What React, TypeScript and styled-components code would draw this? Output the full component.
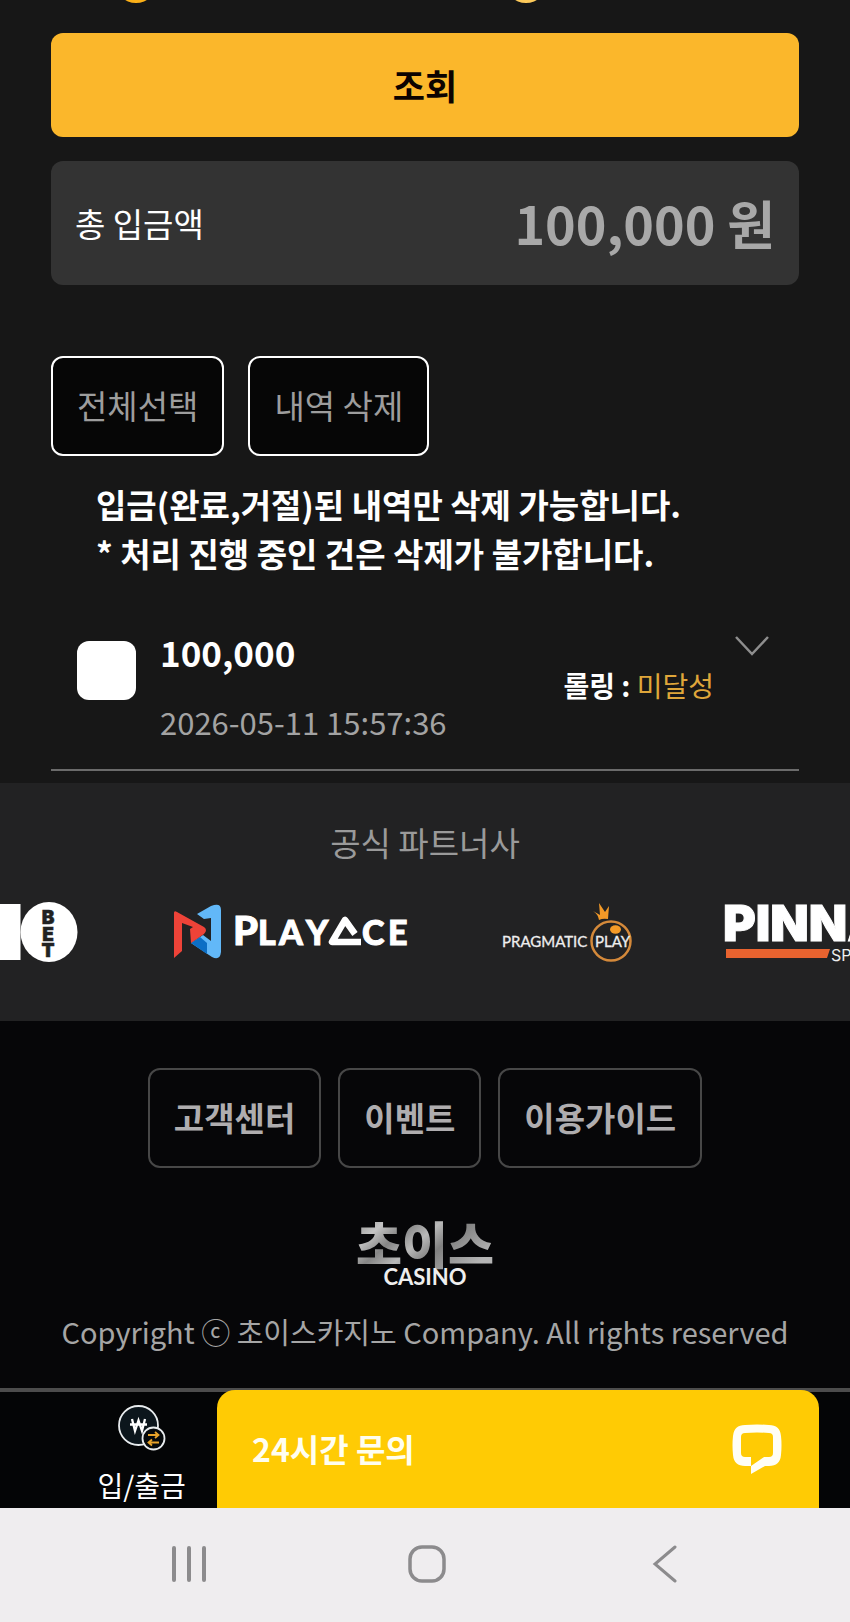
import React from "react";
import styled, { createGlobalStyle } from "styled-components";

const GlobalStyle = createGlobalStyle`
  *, *::before, *::after { box-sizing: border-box; }
  body {
    margin: 0;
    background: #171717;
    color: #fff;
    font-family: "Noto Sans CJK KR", sans-serif;
  }
  button { font: inherit; cursor: pointer; }
  a { color: inherit; text-decoration: none; }
  h2, p { margin: 0; font-weight: 400; }
`;

const Page = styled.div`
  display: flex;
  flex-direction: column;
  overflow: hidden;
`;

const Content = styled.main`
  display: flex;
  flex-direction: column;
  padding: 0 51px 12px;
`;

const Range = styled.div`
  display: grid;
  grid-template-columns: 390px 1fr;
  height: 33px;
  padding-left: 64px;
`;

const Knob = styled.span<{ $tone: string }>`
  width: 42px;
  height: 42px;
  margin-top: -39px;
  border-radius: 50%;
  background: ${(p) => p.$tone};
`;

const SearchButton = styled.button`
  height: 104px;
  padding: 0 0 2px;
  border: 0;
  border-radius: 12px;
  background: #fbb72b;
  color: #0c0300;
  font-size: 35px;
  font-weight: 700;
`;

const Total = styled.section`
  display: flex;
  align-items: center;
  justify-content: space-between;
  height: 124px;
  margin-top: 24px;
  padding: 0 24px;
  border-radius: 12px;
  background: #333;
`;

const TotalLabel = styled.span`
  font-size: 33px;
`;

const TotalValue = styled.strong`
  color: #a8a8a8;
  font-size: 52px;
  line-height: 64px;
`;

const Actions = styled.div`
  display: flex;
  gap: 24px;
  margin-top: 71px;
`;

const OutlineButton = styled.button<{ $muted?: boolean }>`
  height: 100px;
  padding: 0 24px 2px;
  border: 2px solid ${(p) => (p.$muted ? "#474747" : "#fff")};
  border-radius: 12px;
  background: ${(p) => (p.$muted ? "transparent" : "#060606")};
  color: ${(p) => (p.$muted ? "#afadaf" : "#9d9d9d")};
  font-size: 33px;
  font-weight: ${(p) => (p.$muted ? 700 : 400)};
  white-space: nowrap;
`;

const Notice = styled.p`
  margin-top: 24px;
  padding-left: 45px;
  font-size: 33px;
  font-weight: 700;
  line-height: 49px;
`;

const Entry = styled.article`
  display: flex;
  align-items: center;
  height: 193px;
  padding: 0 26px 6px;
  border-bottom: 2px solid #6b6b6b;
`;

const Check = styled.input`
  appearance: none;
  flex: none;
  width: 59px;
  height: 59px;
  margin: 0 24px 0 0;
  border-radius: 12px;
  background: #fff;
`;

const EntryText = styled.label`
  display: flex;
  flex: 1;
  flex-direction: column;
  gap: 20px;
  padding-top: 32px;
`;

const Amount = styled.strong`
  font-size: 35px;
  line-height: 50px;
`;

const Time = styled.time`
  color: #a3a3a3;
  font-size: 31px;
  line-height: 50px;
`;

const Rolling = styled.span`
  padding-top: 28px;
  font-size: 28px;
  font-weight: 700;
`;

const Unmet = styled.span`
  color: #dfa63a;
  font-weight: 400;
`;

const Expand = styled.button`
  align-self: flex-start;
  display: flex;
  margin: 57px 3px 0 20px;
  padding: 0;
  border: 0;
  background: none;
`;

const Partners = styled.section`
  display: flex;
  flex-direction: column;
  align-items: center;
  height: 238px;
  padding-top: 34px;
  background: #222223;
`;

const PartnersTitle = styled.h2`
  color: #9a9a9a;
  font-size: 33px;
  line-height: 50px;
`;

const LogoStrip = styled.div`
  display: flex;
  justify-content: space-between;
  width: 100%;
  margin-top: 33px;
`;

const Footer = styled.footer`
  display: flex;
  flex-direction: column;
  align-items: center;
  height: 367px;
  padding-top: 47px;
  background: #060608;
`;

const FooterLinks = styled.nav`
  display: flex;
  gap: 17px;
`;

const Copyright = styled.p`
  margin-top: 17px;
  color: #a5a5a5;
  font-size: 29px;
  line-height: 50px;
  white-space: nowrap;
`;

const Brand = styled.div`
  display: flex;
  margin-top: 49px;
`;

const BottomBar = styled.div`
  position: relative;
  display: grid;
  grid-template-columns: repeat(3, 1fr);
  height: 120px;
  border-top: 4px solid #4c4c4c;
  background: #040506;
`;

const BottomItem = styled.a`
  display: flex;
  flex-direction: column;
  align-items: center;
  gap: 11px;
  padding-top: 11px;
  font-size: 28px;
  line-height: 42px;
`;

const Chat = styled.button`
  position: absolute;
  top: -2px;
  right: 31px;
  bottom: 0;
  left: 217px;
  display: flex;
  align-items: center;
  justify-content: space-between;
  padding: 0 36px 0 35px;
  border: 0;
  border-radius: 18px 18px 0 0;
  background: #ffcb04;
  color: #fffef0;
  font-size: 32px;
  font-weight: 700;
`;

const ChatLabel = styled.span`
  padding-bottom: 2px;
`;

const SystemNav = styled.nav`
  display: grid;
  grid-template-columns: repeat(3, 1fr);
  align-items: center;
  height: 114px;
  padding: 0 66px 2px 70px;
  background: #efedef;
`;

const SystemButton = styled.button`
  display: flex;
  justify-content: center;
  padding: 0;
  border: 0;
  background: none;
`;

const TenBetLogo = () => (
  <svg width="80" height="64" viewBox="0 0 80 64" role="img" aria-label="10BET">
    <path d="M0 4H20.500V60H0Z" fill="#fff" />
    <ellipse cx="49" cy="32" rx="28.500" ry="30" fill="#fff" />
    <g fill="#222" stroke="#222" strokeWidth="0.500" fontFamily="Inter, sans-serif" fontWeight="900" fontSize="19" textAnchor="middle">
      <text x="48" y="24">B</text>
      <text x="48" y="40.500">E</text>
      <text x="48" y="57">T</text>
    </g>
  </svg>
);

const PlayAceLogo = () => (
  <svg width="240" height="64" viewBox="0 0 240 64" role="img" aria-label="PlayAce">
    <g transform="translate(2 0)">
      <path d="M24 14 38 6Q48 2 48 10V52Q47 61 39 57L18 43 30 35 38 41V18L31 19Z" fill="#62b8f8" />
      <path d="M18 43 27 37 34 43V54Z" fill="#0d6fc5" />
      <path d="M1 13Q1 10 4 12L31 27Q35 30 31 34L18 43 17 29 20 27 9 23V51L1 58Z" fill="#ee4338" />
    </g>
    <g fill="#fff" stroke="#fff" fontFamily="Lato, sans-serif" fontWeight="900">
      <text x="62" y="45" fontSize="40">P</text>
      <text x="87" y="45" fontSize="34">L</text>
      <text x="108" y="45" fontSize="34">A</text>
      <text x="135" y="45" fontSize="34">Y</text>
      <text x="191" y="45" fontSize="34">C</text>
      <text x="217" y="45" fontSize="34">E</text>
    </g>
    <path d="M184 34 174 20 161 42H190" fill="none" stroke="#fff" strokeWidth="6.500" strokeLinejoin="round" />
  </svg>
);

const PragmaticLogo = () => (
  <svg width="132" height="64" viewBox="0 0 132 64" role="img" aria-label="Pragmatic Play">
    <circle cx="110" cy="41" r="19.500" fill="none" stroke="#d4893a" strokeWidth="2.500" />
    <path d="M98 20Q97 14 92 11L99 15 98 3 104 12 108 6 107 19Q102 18 98 20Z" fill="#f49a27" />
    <ellipse cx="114.500" cy="29.500" rx="5.500" ry="4.200" fill="#f49a27" />
    <g fill="#eee" stroke="#eee" strokeWidth="0.300" fontFamily="Lato, sans-serif" fontSize="15">
      <text x="1" y="47">PRAGMATIC</text>
      <text x="94" y="47">PLAY</text>
    </g>
  </svg>
);

const PinnacleLogo = () => (
  <svg width="126" height="64" viewBox="0 0 126 64" role="img" aria-label="Pinnacle Sports">
    <text x="-1" y="41" fill="#fff" stroke="#fff" fontFamily="Inter, sans-serif" fontWeight="900" fontSize="50">PINNA</text>
    <path d="M2 49H106L103 58H2Z" fill="#e8632f" />
    <text x="107" y="61" fill="#eee" fontFamily="Inter, sans-serif" fontSize="16">SP</text>
  </svg>
);

const BrandLogo = () => (
  <svg width="136" height="72" viewBox="0 0 136 72" overflow="visible" role="img" aria-label="초이스 CASINO">
    <defs>
      <linearGradient id="metal" x1="0" y1="0" x2="1" y2="0.600">
        <stop offset="0" stopColor="#777" />
        <stop offset="0.250" stopColor="#c4c4c4" />
        <stop offset="0.400" stopColor="#858585" />
        <stop offset="0.550" stopColor="#b9b9b9" />
        <stop offset="0.700" stopColor="#808080" />
        <stop offset="1" stopColor="#b5b5b5" />
      </linearGradient>
    </defs>
    <text x="68" y="47" textAnchor="middle" fill="url(#metal)" fontFamily="Noto Sans CJK KR, sans-serif" fontWeight="900" fontSize="50">초이스</text>
    <text x="68" y="68" textAnchor="middle" fill="#eee" fontFamily="Lato, sans-serif" fontWeight="700" fontSize="22">CASINO</text>
  </svg>
);

const ExchangeIcon = () => (
  <svg width="52" height="50" viewBox="0 0 52 50" aria-hidden="true">
    <circle cx="22.500" cy="22.500" r="19.500" fill="#0c161c" stroke="#e8ecee" strokeWidth="1.800" />
    <path d="M16 16 19 28 22.500 17.500 26 28 29 16M14 21.500H31" fill="none" stroke="#fff" strokeWidth="2.300" />
    <circle cx="37.500" cy="35.500" r="11" fill="#05090b" stroke="#e8ecee" strokeWidth="1.800" />
    <path d="M32 32H42M39 29 42.500 32 39 35M43 39.500H33M36 36.500 32.500 39.500 36 42.500" fill="none" stroke="#e8a42a" strokeWidth="1.800" />
  </svg>
);

const ChatIcon = () => (
  <svg width="52" height="52" viewBox="0 0 52 52" aria-hidden="true">
    <path
      fillRule="evenodd"
      fill="#fffef5"
      d="M14 2Q26 1 38 2Q49 2 50 13Q51 22 50 32Q49 43 38 43H34L20 51V43H14Q3 43 2 32Q1 22 2 13Q3 2 14 2ZM14 10Q10 10 10 14V30Q10 34 14 34H20V43L33 34H38Q42 34 42 30V14Q42 10 38 10Q26 9 14 10Z"
    />
  </svg>
);

export default function App() {
  return (
    <>
      <GlobalStyle />
      <Page>
        <Content>
          <Range aria-hidden="true">
            <Knob $tone="#fbb018" />
            <Knob $tone="#fcc95a" />
          </Range>
          <SearchButton type="button">조회</SearchButton>
          <Total>
            <TotalLabel>총 입금액</TotalLabel>
            <TotalValue>100,000 원</TotalValue>
          </Total>
          <Actions>
            <OutlineButton type="button">전체선택</OutlineButton>
            <OutlineButton type="button">내역 삭제</OutlineButton>
          </Actions>
          <Notice>
            입금(완료,거절)된 내역만 삭제 가능합니다.
            <br />* 처리 진행 중인 건은 삭제가 불가합니다.
          </Notice>
          <Entry>
            <Check type="checkbox" id="entry" />
            <EntryText htmlFor="entry">
              <Amount>100,000</Amount>
              <Time dateTime="2026-05-11T15:57:36">2026-05-11 15:57:36</Time>
            </EntryText>
            <Rolling>
              롤링 : <Unmet>미달성</Unmet>
            </Rolling>
            <Expand type="button" aria-label="펼치기">
              <svg width="36" height="22" viewBox="0 0 36 22" fill="none" stroke="#8e8e8e" strokeWidth="2.500">
                <path d="M2 2 18 19 34 2" />
              </svg>
            </Expand>
          </Entry>
        </Content>
        <Partners>
          <PartnersTitle>공식 파트너사</PartnersTitle>
          <LogoStrip>
            <TenBetLogo />
            <PlayAceLogo />
            <PragmaticLogo />
            <PinnacleLogo />
          </LogoStrip>
        </Partners>
        <Footer>
          <FooterLinks>
            <OutlineButton type="button" $muted>고객센터</OutlineButton>
            <OutlineButton type="button" $muted>이벤트</OutlineButton>
            <OutlineButton type="button" $muted>이용가이드</OutlineButton>
          </FooterLinks>
          <Brand>
            <BrandLogo />
          </Brand>
          <Copyright>Copyright ⓒ 초이스카지노 Company. All rights reserved</Copyright>
        </Footer>
        <BottomBar>
          <BottomItem href="#exchange">
            <ExchangeIcon />
            입/출금
          </BottomItem>
          <Chat type="button">
            <ChatLabel>24시간 문의</ChatLabel>
            <ChatIcon />
          </Chat>
        </BottomBar>
        <SystemNav>
          <SystemButton type="button" aria-label="Recent apps">
            <svg width="38" height="38" viewBox="0 0 38 38" stroke="#8c8b8d" strokeWidth="4" strokeLinecap="round">
              <path d="M4 3V35M19 3V35M34 3V35" />
            </svg>
          </SystemButton>
          <SystemButton type="button" aria-label="Home">
            <svg width="38" height="38" viewBox="0 0 38 38" fill="none" stroke="#8c8b8d" strokeWidth="3.500">
              <rect x="2" y="2" width="34" height="34" rx="12" />
            </svg>
          </SystemButton>
          <SystemButton type="button" aria-label="Back">
            <svg width="26" height="38" viewBox="0 0 26 38" fill="none" stroke="#8c8b8d" strokeWidth="3" strokeLinecap="round">
              <path d="M23 2 3 19 23 36" />
            </svg>
          </SystemButton>
        </SystemNav>
      </Page>
    </>
  );
}
